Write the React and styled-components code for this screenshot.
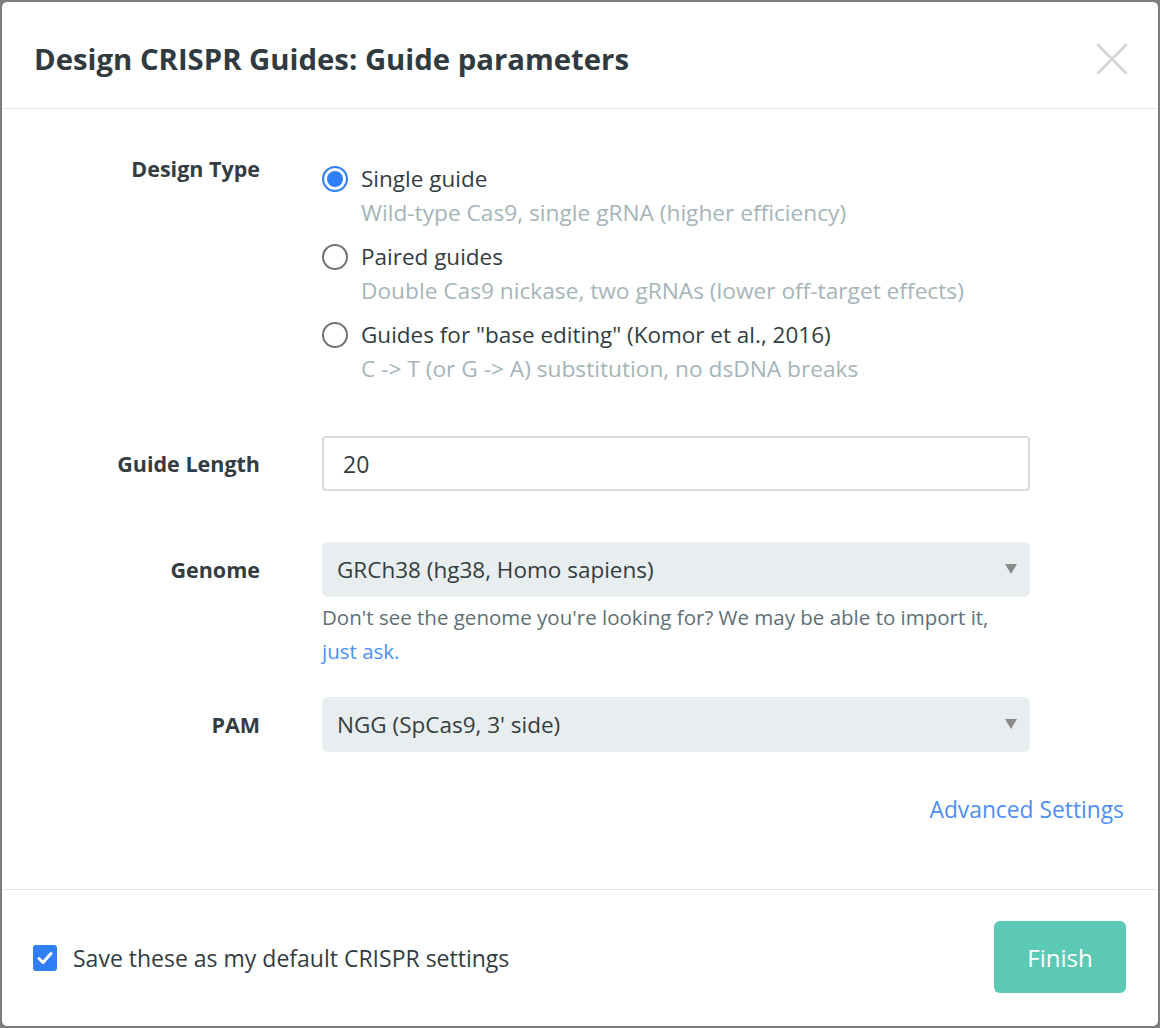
import React, { useState } from 'react';
import styled, { createGlobalStyle, css } from 'styled-components';

const GlobalStyle = createGlobalStyle`
  html, body {
    margin: 0;
    padding: 0;
    background: #7d7d7f;
  }
  body {
    font-family: 'Open Sans', 'Liberation Sans', sans-serif;
    color: #333d41;
  }
  * {
    box-sizing: border-box;
  }
`;

const Overlay = styled.div`
  width: 1160px;
  height: 1028px;
  padding: 2px;
`;

const Modal = styled.div`
  width: 1156px;
  height: 1024px;
  background: #fff;
  border-radius: 5px;
  display: flex;
  flex-direction: column;
`;

const Header = styled.div`
  height: 107px;
  border-bottom: 1px solid #e4eaec;
  display: flex;
  align-items: center;
  justify-content: space-between;
  padding: 8px 26px 0 32px;
  h1 {
    margin: 0;
    font-size: 29.3px;
    font-weight: 700;
    color: #313b3f;
  }
`;

const CloseButton = styled.button`
  border: none;
  background: none;
  padding: 0;
  width: 40px;
  height: 40px;
  margin-top: 0;
  cursor: pointer;
  display: flex;
  align-items: center;
  justify-content: center;
`;

const Body = styled.div`
  flex: 1;
  padding: 45px 32px 0 0;
  display: flex;
  flex-direction: column;
`;

const FieldRow = styled.div`
  display: grid;
  grid-template-columns: 258px 708px;
  column-gap: 62px;
  align-items: ${({ top }) => (top ? 'start' : 'center')};
  margin-bottom: ${({ mb }) => mb || 0}px;
`;

const Label = styled.div`
  text-align: right;
  font-size: 21.5px;
  font-weight: 700;
  color: #333d41;
  line-height: 30px;
  margin-top: ${({ mt }) => mt || 0}px;
`;

const Options = styled.div`
  display: flex;
  flex-direction: column;
  padding-top: 11px;
`;

const Option = styled.label`
  display: grid;
  grid-template-columns: 26px 1fr;
  column-gap: 13px;
  margin-bottom: 16px;
  cursor: pointer;
  &:last-child {
    margin-bottom: 0;
  }
  .title {
    font-size: 22.5px;
    line-height: 28px;
    color: #333d41;
  }
  .desc {
    grid-column: 2;
    margin-top: 6px;
    font-size: 22.7px;
    line-height: 28px;
    color: #a5b5b9;
  }
`;

const Radio = styled.span`
  width: 26px;
  height: 26px;
  margin-top: 1px;
  border-radius: 50%;
  border: 2px solid #6f7577;
  background: #fff;
  ${({ checked }) =>
    checked &&
    css`
      border-color: #2f7ff7;
      box-shadow: inset 0 0 0 3px #fff, inset 0 0 0 14px #2f7ff7;
    `}
`;

const TextInput = styled.input`
  height: 55px;
  width: 100%;
  border: 2px solid #d3dcdf;
  border-radius: 4px;
  padding: 0 19px;
  font-family: 'Open Sans', 'Liberation Sans', sans-serif;
  font-size: 23px;
  color: #333d41;
  outline: none;
`;

const Select = styled.div`
  position: relative;
  height: 55px;
  width: 100%;
  background: #e8eef0;
  border-radius: 6px;
  padding: 0 15px;
  display: flex;
  align-items: center;
  font-size: 22.5px;
  color: #333d41;
  &::after {
    content: '';
    position: absolute;
    right: 13px;
    top: 22px;
    border-left: 6px solid transparent;
    border-right: 6px solid transparent;
    border-top: 10px solid #8a8a8a;
  }
`;

const Help = styled.div`
  margin-top: 3px;
  max-width: 690px;
  font-size: 20.5px;
  line-height: 34px;
  color: #5e7076;
  a {
    color: #4d8ff5;
    text-decoration: none;
  }
`;

const Advanced = styled.div`
  display: flex;
  justify-content: flex-end;
  margin-top: 42px;
  padding-right: 2px;
  a {
    font-size: 22.8px;
    color: #4d8ff5;
    text-decoration: none;
  }
`;

const Footer = styled.div`
  height: 137px;
  border-top: 1px solid #e4eaec;
  display: flex;
  align-items: center;
  justify-content: space-between;
  padding: 0 32px 0 31px;
`;

const CheckLabel = styled.label`
  display: flex;
  align-items: center;
  gap: 16px;
  font-size: 23px;
  color: #333d41;
  cursor: pointer;
`;

const Checkbox = styled.span`
  width: 24px;
  height: 26px;
  border-radius: 3px;
  background: #2f7ff7;
  display: flex;
  align-items: center;
  justify-content: center;
`;

const FinishButton = styled.button`
  width: 132px;
  height: 72px;
  margin-top: -2px;
  border: none;
  border-radius: 6px;
  background: #5cc9b4;
  color: #fff;
  font-family: 'Open Sans', 'Liberation Sans', sans-serif;
  font-size: 24px;
  cursor: pointer;
`;

const designTypes = [
  {
    key: 'single',
    title: 'Single guide',
    desc: 'Wild-type Cas9, single gRNA (higher efficiency)',
  },
  {
    key: 'paired',
    title: 'Paired guides',
    desc: 'Double Cas9 nickase, two gRNAs (lower off-target effects)',
  },
  {
    key: 'base',
    title: 'Guides for "base editing" (Komor et al., 2016)',
    desc: 'C -> T (or G -> A) substitution, no dsDNA breaks',
  },
];

const App = () => {
  const [designType, setDesignType] = useState('single');
  const [length, setLength] = useState('20');
  const [saveDefault, setSaveDefault] = useState(true);

  return (
    <Overlay>
      <GlobalStyle />
      <Modal>
        <Header>
          <h1>Design CRISPR Guides: Guide parameters</h1>
          <CloseButton aria-label="close">
            <svg width="32" height="32" viewBox="0 0 32 32">
              <path
                d="M2 2 L30 30 M30 2 L2 30"
                stroke="#d3d6d8"
                strokeWidth="2.5"
                strokeLinecap="round"
              />
            </svg>
          </CloseButton>
        </Header>
        <Body>
          <FieldRow top mb={53}>
            <Label>Design Type</Label>
            <Options>
              {designTypes.map((type) => (
                <Option key={type.key} onClick={() => setDesignType(type.key)}>
                  <Radio checked={designType === type.key} />
                  <span className="title">{type.title}</span>
                  <span className="desc">{type.desc}</span>
                </Option>
              ))}
            </Options>
          </FieldRow>
          <FieldRow mb={51}>
            <Label>Guide Length</Label>
            <TextInput
              value={length}
              onChange={(e) => setLength(e.target.value)}
            />
          </FieldRow>
          <FieldRow top mb={29}>
            <Label mt={13}>Genome</Label>
            <div>
              <Select>GRCh38 (hg38, Homo sapiens)</Select>
              <Help>
                Don't see the genome you're looking for? We may be able to
                import it, <a href="#">just ask.</a>
              </Help>
            </div>
          </FieldRow>
          <FieldRow>
            <Label>PAM</Label>
            <Select>NGG (SpCas9, 3' side)</Select>
          </FieldRow>
          <Advanced>
            <a href="#">Advanced Settings</a>
          </Advanced>
        </Body>
        <Footer>
          <CheckLabel onClick={() => setSaveDefault(!saveDefault)}>
            <Checkbox>
              {saveDefault && (
                <svg width="16" height="14" viewBox="0 0 16 14">
                  <path
                    d="M2 7.5 L6 11.5 L14 2.5"
                    fill="none"
                    stroke="#fff"
                    strokeWidth="3"
                    strokeLinecap="round"
                    strokeLinejoin="round"
                  />
                </svg>
              )}
            </Checkbox>
            Save these as my default CRISPR settings
          </CheckLabel>
          <FinishButton>Finish</FinishButton>
        </Footer>
      </Modal>
    </Overlay>
  );
};

export default App;
